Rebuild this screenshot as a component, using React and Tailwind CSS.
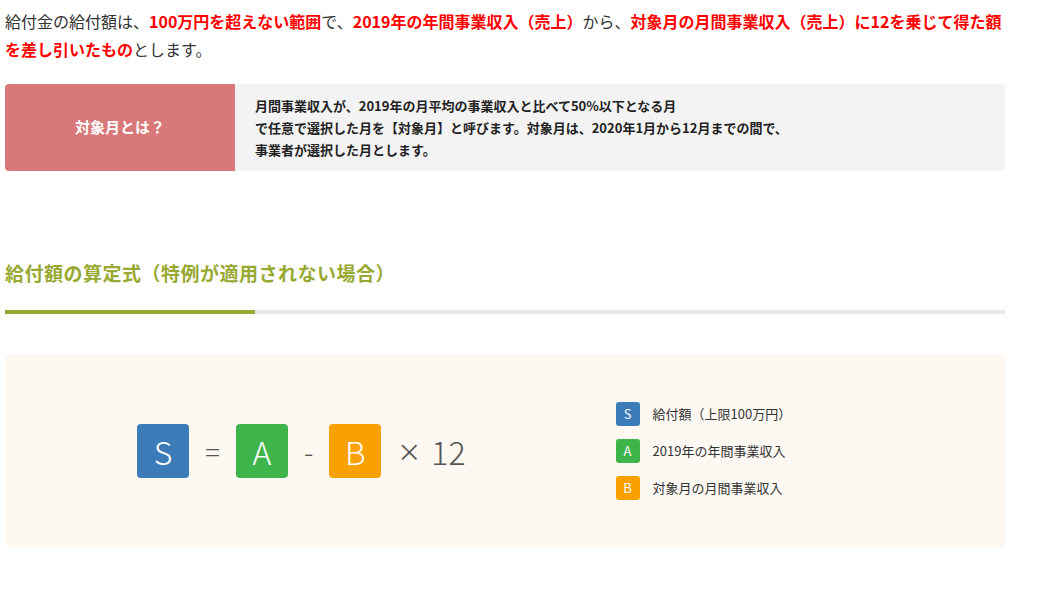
export default function App() {
  const f = { fontFamily: '"Noto Sans CJK JP", "Noto Sans", sans-serif' };
  const sq = "w-[52px] h-[54px] rounded-[4px] flex items-center justify-center text-white text-[32px] font-light";
  const lg = "w-[24px] h-[24px] rounded-[3px] flex items-center justify-center text-white text-[13px]";
  return (
    <div className="bg-white w-[1045px] h-[591px] px-[5px] text-[#333]" style={f}>
      <div className="w-[1000px]">
        <p className="text-[16px] leading-[28px] pt-[7px]">
          給付金の給付額は、<b className="text-[#ff0000]">100万円を超えない範囲</b>で、<b className="text-[#ff0000]">2019年の年間事業収入（売上）</b>から、<b className="text-[#ff0000]">対象月の月間事業収入（売上）に12を乗じて得た額を差し引いたもの</b>とします。
        </p>
        <div className="flex mt-[21px] h-[87px] rounded-[4px] overflow-hidden">
          <div className="w-[230px] bg-[#d97878] text-white font-bold text-[15px] flex items-center justify-center">対象月とは？</div>
          <div className="flex-1 bg-[#f3f3f3] text-[13px] font-bold leading-[22px] text-[#222] px-[20px] flex flex-col justify-center">
            <div>月間事業収入が、2019年の月平均の事業収入と比べて50%以下となる月</div>
            <div>で任意で選択した月を【対象月】と呼びます。対象月は、2020年1月から12月までの間で、</div>
            <div>事業者が選択した月とします。</div>
          </div>
        </div>
        <h2 className="mt-[88px] text-[19px] font-bold text-[#98a932] leading-[28px] tracking-[0.5px]">給付額の算定式（特例が適用されない場合）</h2>
        <div className="mt-[23px] h-[4px] bg-[#e8e8e8] flex"><div className="w-[250px] bg-[#98a932]" /></div>
        <div className="mt-[40px] h-[193px] bg-[#fdf8f2] rounded-[4px] flex items-center">
          <div className="flex items-center ml-[132px] text-[#555]">
            <div className={sq + " bg-[#3a7bb8]"}>S</div>
            <span className="mx-[16px] text-[28px] font-light">=</span>
            <div className={sq + " bg-[#3db54a]"}>A</div>
            <span className="mx-[16px] text-[28px] font-light">-</span>
            <div className={sq + " bg-[#f9a100]"}>B</div>
            <span className="ml-[16px] text-[24px]">×</span>
            <span className="ml-[10px] text-[32px] font-light">12</span>
          </div>
          <div className="ml-[150px] flex flex-col gap-[13px] text-[13px] text-[#333]">
            <div className="flex items-center gap-[13px]"><div className={lg + " bg-[#3a7bb8]"}>S</div>給付額（上限100万円）</div>
            <div className="flex items-center gap-[13px]"><div className={lg + " bg-[#3db54a]"}>A</div>2019年の年間事業収入</div>
            <div className="flex items-center gap-[13px]"><div className={lg + " bg-[#f9a100]"}>B</div>対象月の月間事業収入</div>
          </div>
        </div>
      </div>
    </div>
  );
}
